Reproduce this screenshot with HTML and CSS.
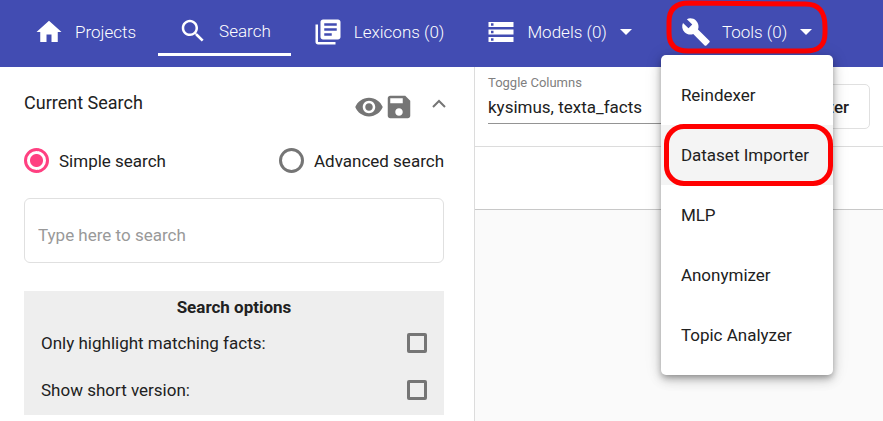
FILE: index.html
```html
<!DOCTYPE html>
<html lang="en">
<head>
<meta charset="utf-8">
<title>Search</title>
<link rel="stylesheet" href="styles.css">
</head>
<body>
<nav class="nav">
  <a class="nav-item" href="#"><svg class="icon" viewBox="0 0 24 24"><path d="M10 20v-6h4v6h5v-8h3L12 3 2 12h3v8z"/></svg><span>Projects</span></a>
  <a class="nav-item active" href="#"><svg class="icon" viewBox="0 0 24 24"><path d="M15.5 14h-.79l-.28-.27C15.41 12.59 16 11.11 16 9.500 16 5.910 13.090 3 9.500 3S3 5.910 3 9.500 5.910 16 9.500 16c1.610 0 3.090-.59 4.230-1.570l.27.28v.79l5 4.990L20.490 19l-4.990-5zm-6 0C7.010 14 5 11.990 5 9.500S7.010 5 9.500 5 14 7.010 14 9.500 11.990 14 9.500 14z"/></svg><span>Search</span></a>
  <a class="nav-item" href="#"><svg class="icon" viewBox="0 0 24 24"><path d="M4 6H2v14c0 1.100.9 2 2 2h14v-2H4V6zm16-4H8c-1.100 0-2 .9-2 2v12c0 1.100.9 2 2 2h12c1.100 0 2-.9 2-2V4c0-1.100-.9-2-2-2zm-1 9H9V9h10v2zm-4 4H9v-2h6v2zm4-8H9V5h10v2z"/></svg><span>Lexicons (0)</span></a>
  <button class="nav-item" type="button"><svg class="icon" viewBox="0 0 24 24"><path d="M2 20h20v-4H2v4zm2-3h2v2H4v-2zM2 4v4h20V4H2zm4 3H4V5h2v2zm-4 7h20v-4H2v4zm2-3h2v2H4v-2z"/></svg><span>Models (0)</span><span class="caret"></span></button>
  <div class="menu-anchor">
    <button class="nav-item" type="button" aria-expanded="true"><svg class="icon" viewBox="0 0 24 24"><path d="M22.700 19l-9.100-9.100c.9-2.300.4-5-1.500-6.900-2-2-5-2.400-7.400-1.300L9 6 6 9 1.600 4.700C.4 7.100.9 10.100 2.900 12.100c1.900 1.900 4.600 2.400 6.900 1.500l9.100 9.100c.4.4 1 .4 1.400 0l2.300-2.300c.5-.4.5-1.100.1-1.400z"/></svg><span>Tools (0)</span><span class="caret"></span></button>
    <svg class="mark mark-tools" viewBox="0 0 164 56"><path d="M24 3L140 4C155 4 160 13 160 27V33C160 45 154 51 140 51H23C10 51 4 45 4 33V22C4 9 11 3 24 3Z"/></svg>
    <div class="menu" role="menu">
      <button class="menu-item" type="button" role="menuitem">Reindexer</button>
      <button class="menu-item hovered" type="button" role="menuitem">Dataset Importer</button>
      <button class="menu-item" type="button" role="menuitem">MLP</button>
      <button class="menu-item" type="button" role="menuitem">Anonymizer</button>
      <button class="menu-item" type="button" role="menuitem">Topic Analyzer</button>
      <span class="mark mark-importer"></span>
    </div>
  </div>
</nav>
<div class="workspace">
  <aside class="search-panel">
    <header class="panel-head">
      <h1>Current Search</h1>
      <button class="icon-button" type="button" aria-label="Preview"><svg class="icon" viewBox="0 0 24 24"><path d="M12 4.500C7 4.500 2.730 7.610 1 12c1.730 4.390 6 7.500 11 7.500s9.270-3.110 11-7.500c-1.730-4.390-6-7.500-11-7.500zM12 17c-2.760 0-5-2.240-5-5s2.240-5 5-5 5 2.240 5 5-2.240 5-5 5zm0-8c-1.660 0-3 1.340-3 3s1.340 3 3 3 3-1.340 3-3-1.340-3-3-3z"/></svg></button>
      <button class="icon-button" type="button" aria-label="Save"><svg class="icon" viewBox="0 0 24 24"><path d="M17 3H5c-1.110 0-2 .9-2 2v14c0 1.100.89 2 2 2h14c1.100 0 2-.9 2-2V7l-4-4zm-5 16c-1.660 0-3-1.340-3-3s1.340-3 3-3 3 1.340 3 3-1.340 3-3 3zm3-10H5V5h10v4z"/></svg></button>
      <button class="icon-button collapse" type="button" aria-label="Collapse"><svg viewBox="0 0 14 9"><path d="M1 8l6-6 6 6"/></svg></button>
    </header>
    <div class="modes">
      <label class="mode"><input type="radio" name="mode" checked>Simple search</label>
      <label class="mode"><input type="radio" name="mode">Advanced search</label>
    </div>
    <input class="query" type="text" placeholder="Type here to search" aria-label="Search text">
    <section class="options">
      <h2>Search options</h2>
      <label class="option">Only highlight matching facts:<input type="checkbox"></label>
      <label class="option">Show short version:<input type="checkbox"></label>
    </section>
  </aside>
  <main class="results">
    <div class="toolbar">
      <div class="columns-field">
        <label for="columns">Toggle Columns</label>
        <select id="columns"><option>kysimus, texta_facts</option></select>
      </div>
      <button class="filter-button" type="button">Filter</button>
    </div>
    <div class="table-head"></div>
  </main>
</div>
</body>
</html>
```
FILE: styles.css
```css
* {
  box-sizing: border-box;
}

body {
  margin: 0;
  min-height: 100vh;
  display: flex;
  flex-direction: column;
  background: #fafafa;
  color: #212121;
  font: 400 17px/24px Roboto, sans-serif;
}

button,
input,
select {
  font: inherit;
  color: inherit;
}

button {
  border: 0;
  padding: 0;
  background: none;
}

.icon {
  width: 30px;
  height: 30px;
  flex: none;
  fill: currentColor;
}

/* Navigation */
.nav {
  height: 67px;
  flex: none;
  display: flex;
  gap: 2px;
  padding: 8px 14px 11px;
  background: #424cb2;
}

.nav-item {
  height: 48px;
  display: flex;
  align-items: center;
  gap: 11px;
  padding: 0 20px;
  color: #fff;
  font-weight: 300;
  text-decoration: none;
  white-space: nowrap;
}

.nav-item.active {
  border-bottom: 3px solid #fff;
}

button.nav-item {
  padding-right: 27px;
}

.caret {
  margin-left: 2px;
  border: 6px solid transparent;
  border-top-color: #fff;
  border-bottom: 0;
}

.menu-anchor {
  position: relative;
}

.menu {
  position: absolute;
  z-index: 1;
  top: 47px;
  left: 0;
  width: 172px;
  padding: 10px 0;
  border-radius: 5px;
  background: #fff;
  box-shadow: 0 3px 6px -1px rgba(0, 0, 0, .3), 0 5px 12px rgba(0, 0, 0, .18), 0 1px 18px rgba(0, 0, 0, .1);
}

.menu-item {
  display: block;
  width: 100%;
  height: 60px;
  padding: 0 20px;
  text-align: left;
  white-space: nowrap;
}

.menu-item.hovered {
  background: #f4f4f4;
}

.mark {
  position: absolute;
  pointer-events: none;
}

.mark-tools {
  top: -8px;
  left: 4px;
  width: 164px;
  height: 56px;
  fill: none;
  stroke: #f00;
  stroke-width: 5px;
}

.mark-importer {
  top: 69px;
  left: 3px;
  width: 169px;
  height: 62px;
  border: 5px solid #f00;
  border-radius: 20px;
}

/* Search panel */
.workspace {
  flex: 1;
  display: flex;
}

.search-panel {
  width: 475px;
  flex: none;
  padding: 20px 30px 6px 24px;
  border-right: 1px solid #dcdcdc;
  background: #fff;
}

.panel-head {
  display: flex;
  align-items: center;
  height: 40px;
  margin-right: -2px;
  color: #757575;
}

h1,
h2 {
  margin: 0;
  line-height: 24px;
}

h1 {
  flex: 1;
  padding-bottom: 8px;
  font-size: 18px;
  font-weight: 400;
  color: #212121;
}

.icon-button {
  display: flex;
}

.collapse {
  margin-left: 18px;
  padding-bottom: 8px;
}

.collapse svg {
  width: 14px;
  height: 9px;
  fill: none;
  stroke: currentColor;
  stroke-width: 2px;
}

.modes {
  display: flex;
  justify-content: space-between;
  padding: 21px 0 25px;
}

.mode {
  display: flex;
  align-items: center;
  gap: 10px;
}

.mode input {
  appearance: none;
  width: 25px;
  height: 25px;
  margin: 0;
  border: 3px solid #757575;
  border-radius: 50%;
}

.mode input:checked {
  border-color: #ff4081;
  background: radial-gradient(circle, #ff4081 6px, transparent 7px);
}

.query {
  display: block;
  width: 100%;
  height: 65px;
  padding: 8px 13px 0;
  border: 1px solid #e0e0e0;
  border-radius: 6px;
  background: #fff;
}

.query::placeholder {
  color: #999;
  opacity: 1;
}

.options {
  margin-top: 28px;
  padding: 4px 17px 2px;
  background: #eee;
}

h2 {
  font-size: 17px;
  font-weight: 700;
  text-align: center;
}

.option {
  display: flex;
  justify-content: space-between;
  align-items: center;
  height: 47px;
}

.option input {
  appearance: none;
  width: 20px;
  height: 20px;
  margin: 0;
  border: 3px solid #757575;
  border-radius: 2px;
}

/* Results */
.results {
  flex: 1;
  min-width: 0;
}

.toolbar {
  height: 80px;
  display: flex;
  justify-content: space-between;
  padding: 8px 13px 0;
  border-bottom: 1px solid #dcdcdc;
  background: #fff;
}

.columns-field {
  width: 225px;
}

.columns-field label {
  display: block;
  color: #808080;
  font-size: 13px;
  line-height: 16px;
}

.columns-field select {
  appearance: none;
  display: block;
  width: 100%;
  height: 33px;
  padding: 0 0 1px;
  border: 0;
  border-bottom: 1px solid #949494;
  border-radius: 0;
  background: none;
}

.filter-button {
  height: 45px;
  margin-top: 9px;
  padding: 0 20px;
  border: 1px solid #e0e0e0;
  border-radius: 5px;
  font-weight: 500;
}

.table-head {
  height: 63px;
  border-bottom: 1px solid #c8c8c8;
  background: #fff;
}
```
